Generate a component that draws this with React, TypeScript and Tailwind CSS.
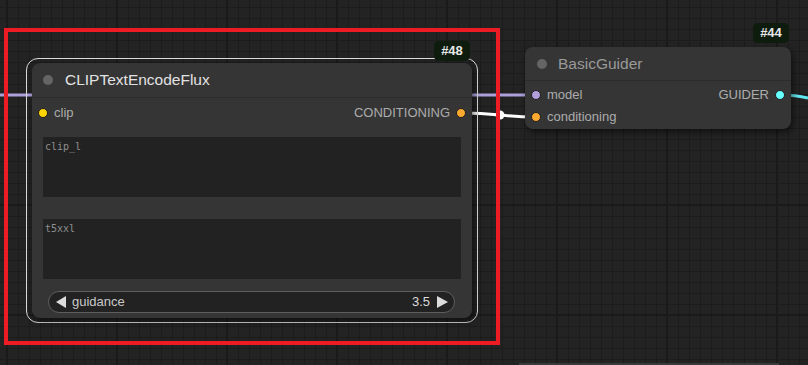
import React from "react";

function Dot({ color }: { color: string }) {
  return (
    <span
      className="block h-[10px] w-[10px] shrink-0 rounded-full border border-[#1e1e1e]"
      style={{ backgroundColor: color }}
    />
  );
}

function Badge({ label }: { label: string }) {
  return (
    <div className="flex h-[20px] w-[36px] items-center justify-center rounded-[5px] bg-[#0e1c0e] text-[13px] font-bold text-[#e8e8e8]">
      {label}
    </div>
  );
}

function Arrow({ dir }: { dir: "left" | "right" }) {
  return (
    <svg width="11" height="12" viewBox="0 0 11 12" className="shrink-0">
      {dir === "left" ? (
        <polygon points="10,0 10,12 0,6" fill="#dcdcdc" />
      ) : (
        <polygon points="0,0 0,12 11,6" fill="#dcdcdc" />
      )}
    </svg>
  );
}

export default function App() {
  return (
    <div className="relative h-[365px] w-[808px] overflow-hidden bg-[#232323] bg-[linear-gradient(to_right,#1a1a1a_2px,transparent_2px),linear-gradient(to_bottom,#1a1a1a_2px,transparent_2px),linear-gradient(to_right,#1c1c1c_1px,transparent_1px),linear-gradient(to_bottom,#1c1c1c_1px,transparent_1px)] bg-[size:110px_110px,110px_110px,11px_11px,11px_11px] bg-[position:6px_94px,6px_94px,7px_7px,7px_7px] font-['Liberation_Sans',Arial,sans-serif]">
      {/* Links */}
      <svg className="absolute inset-0" width="808" height="365">
        <path d="M0 95 L536 95" stroke="#ac9fda" strokeWidth="3" fill="none" />
        <path
          d="M462 113 C 498 113, 502 117, 536 117"
          stroke="#ffffff"
          strokeWidth="3"
          fill="none"
        />
        <circle cx="500" cy="115" r="4.5" fill="#ffffff" />
        <path
          d="M780 95 C 795 95, 800 96, 808 98"
          stroke="#62e6f2"
          strokeWidth="3"
          fill="none"
        />
      </svg>

      {/* Selection outline */}
      <div className="absolute left-[26px] top-[58px] h-[265px] w-[452px] rounded-[12px] border border-[#dadada]" />

      {/* CLIPTextEncodeFlux node */}
      <div className="absolute left-[32px] top-[63px] flex h-[255px] w-[440px] flex-col rounded-[8px] bg-[#353535] shadow-[2px_3px_6px_rgba(0,0,0,0.55)]">
        <div className="flex h-[35px] items-center border-b border-[#2c2c2c] pl-[11px]">
          <span className="block h-[10px] w-[10px] rounded-full bg-[#656565]" />
          <span className="ml-[12px] text-[15.5px] text-[#e2e2e2]">CLIPTextEncodeFlux</span>
        </div>
        <div className="flex h-[30px] items-center justify-between pl-[6px] pr-[6px]">
          <div className="flex items-center gap-[6px]">
            <Dot color="#ffd500" />
            <span className="text-[13px] text-[#acacac]">clip</span>
          </div>
          <div className="flex items-center gap-[6px]">
            <span className="text-[13px] text-[#acacac]">CONDITIONING</span>
            <Dot color="#ffa931" />
          </div>
        </div>
        <div className="mx-[11px] mt-[9px] h-[60px] bg-[#222222] pl-[2px] pt-[2px] font-['DejaVu_Sans_Mono',monospace] text-[10px] text-[#8e8e8e]">
          clip_l
        </div>
        <div className="mx-[11px] mt-[22px] h-[60px] bg-[#222222] pl-[2px] pt-[2px] font-['DejaVu_Sans_Mono',monospace] text-[10px] text-[#8e8e8e]">
          t5xxl
        </div>
        <div className="ml-[16px] mr-[17px] mt-[12px] flex h-[22px] items-center rounded-full border border-[#5e5e5e] bg-[#222222] pl-[7px] pr-[6px]">
          <Arrow dir="left" />
          <span className="ml-[5px] text-[13px] text-[#c8c8c8]">guidance</span>
          <span className="ml-auto text-[13px] text-[#dcdcdc]">3.5</span>
          <span className="ml-[7px]">
            <Arrow dir="right" />
          </span>
        </div>
      </div>

      <div className="absolute left-[434px] top-[41px]">
        <Badge label="#48" />
      </div>

      {/* BasicGuider node */}
      <div className="absolute left-[525px] top-[47px] flex h-[82px] w-[266px] flex-col rounded-[8px] bg-[#353535] shadow-[2px_3px_6px_rgba(0,0,0,0.55)]">
        <div className="flex h-[34px] items-center border-b border-[#2c2c2c] pl-[12px]">
          <span className="block h-[10px] w-[10px] rounded-full bg-[#656565]" />
          <span className="ml-[11px] text-[15.5px] text-[#9a9a9a]">BasicGuider</span>
        </div>
        <div className="flex flex-col pt-[3px] pl-[6px] pr-[6px]">
          <div className="flex h-[22px] items-center justify-between">
            <div className="flex items-center gap-[6px]">
              <Dot color="#b39ddb" />
              <span className="text-[13px] text-[#acacac]">model</span>
            </div>
            <div className="flex items-center gap-[6px]">
              <span className="text-[13px] text-[#acacac]">GUIDER</span>
              <Dot color="#66ffff" />
            </div>
          </div>
          <div className="flex h-[22px] items-center">
            <div className="flex items-center gap-[6px]">
              <Dot color="#ffa931" />
              <span className="text-[13px] text-[#acacac]">conditioning</span>
            </div>
          </div>
        </div>
      </div>

      <div className="absolute left-[753px] top-[23px]">
        <Badge label="#44" />
      </div>

      {/* bottom strip */}
      <div className="absolute left-[519px] top-[363px] h-[2px] w-[260px] bg-[#3a3a3a]" />

      {/* Red highlight */}
      <div className="absolute left-[4px] top-[28px] h-[317px] w-[496px] border-4 border-[#ed1c24]" />
    </div>
  );
}
